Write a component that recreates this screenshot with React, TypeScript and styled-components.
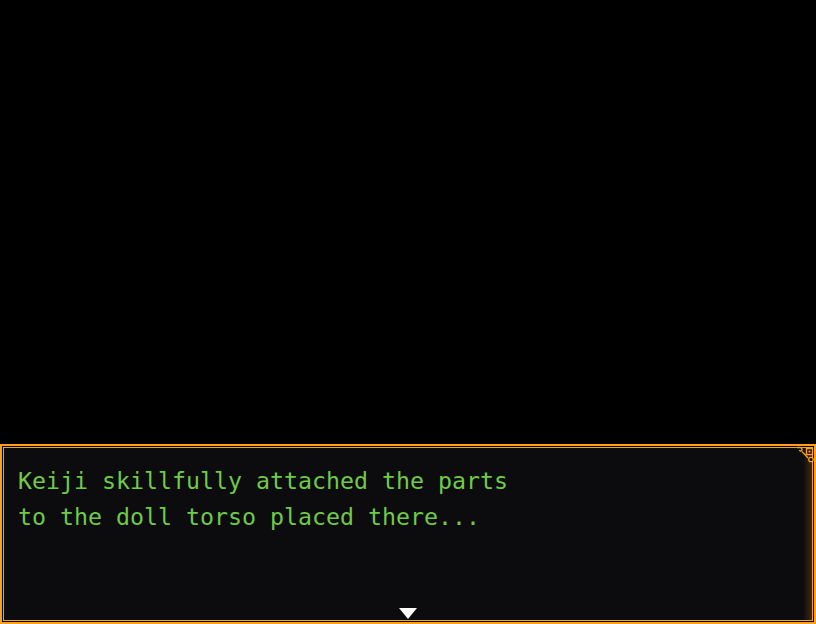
import React from "react";
import styled, { createGlobalStyle } from "styled-components";

const Global = createGlobalStyle`
  html, body { margin: 0; padding: 0; background: #000; }
  #root { width: 816px; height: 624px; }
`;

const Screen = styled.div`
  width: 816px;
  height: 624px;
  display: flex;
  flex-direction: column;
  background: #000;
  overflow: hidden;
`;

const Stage = styled.div`
  flex: 1;
  background: #000;
`;

const Dialog = styled.div`
  position: relative;
  height: 180px;
  box-sizing: border-box;
  border: 2px solid #f9a11b;
  padding: 1px;
  background: #000;
  display: flex;
`;

const Inner = styled.div`
  position: relative;
  flex: 1;
  box-sizing: border-box;
  border: 1px solid #f9a11b;
  background:
    linear-gradient(to right, rgba(0,0,0,0) calc(100% - 9px), rgba(130, 75, 10, 0.45)),
    #0c0c0f;
  padding: 15px 14px 0 14px;
`;

const Line = styled.div`
  font-family: "DejaVu Sans Mono", "Liberation Mono", monospace;
  font-size: 23.25px;
  line-height: 36px;
  color: #6fcb45;
  white-space: pre;
`;

const NextArrow = styled.div`
  position: absolute;
  left: 50%;
  bottom: 1px;
  margin-left: -9.5px;
  width: 0;
  height: 0;
  border-left: 9px solid transparent;
  border-right: 9px solid transparent;
  border-top: 11px solid #ffffff;
`;

const Ornament = styled.svg`
  position: absolute;
  top: -2px;
  right: -2px;
  width: 22px;
  height: 22px;
`;

export default function App() {
  return (
    <>
      <Global />
      <Screen>
        <Stage />
        <Dialog>
          <Inner>
            <Line>Keiji skillfully attached the parts</Line>
            <Line>to the doll torso placed there...</Line>
            <NextArrow />
          </Inner>
          <Ornament viewBox="0 0 22 22">
            <path d="M3 3.5 H6 Q8 3.5 8 5.5 Q8 7 6.5 7 Q5.5 7 5.5 6 M8 7.5 L14 14" stroke="#f9a11b" strokeWidth="1.3" fill="none" />
            <rect x="12.5" y="4.5" width="6" height="6" stroke="#f9a11b" strokeWidth="1.4" fill="#0c0c0f" />
            <rect x="14.5" y="6.5" width="2" height="2" fill="#f9a11b" />
            <circle cx="17" cy="15.5" r="2.2" stroke="#f9a11b" strokeWidth="1.3" fill="#0c0c0f" />
          </Ornament>
        </Dialog>
      </Screen>
    </>
  );
}
